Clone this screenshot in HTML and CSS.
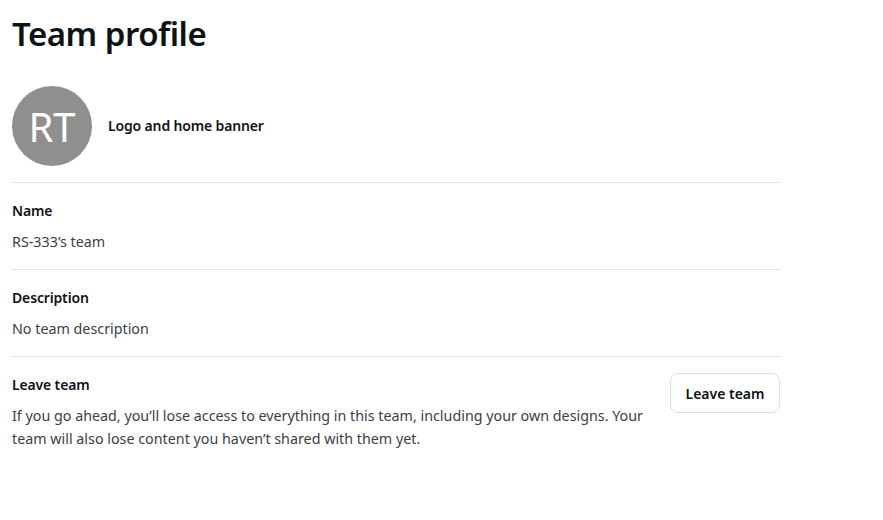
FILE: index.html
```html
<!doctype html>
<html lang="en">

<head>
  <meta charset="UTF-8" />
  <meta name="viewport" content="width=device-width, initial-scale=1.0" />
  <title>Team profile</title>
  <link rel="stylesheet" href="styles.css">
</head>

<body>
  <div class="page">
    <h1 class="title"> Team profile </h1>

    <div class="section section-logo">
      <div class="avatar"> RT </div>
      <div class="label"> Logo and home banner </div>
    </div>

    <div class="section">
      <div class="label"> Name </div>
      <div class="value"> RS-333’s team </div>
    </div>

    <div class="section">
      <div class="label"> Description </div>
      <div class="value"> No team description </div>
    </div>

    <div class="section section-leave">
      <div class="leave-text">
        <div class="label"> Leave team </div>
        <p class="value"> If you go ahead, you’ll lose access to everything in this team, including your own designs. Your team will also lose content you haven’t shared with them yet. </p>
      </div>
      <div class="btn"> Leave team </div>
    </div>
  </div>
</body>

</html>
```

FILE: styles.css
```css
body {
  margin: 0;
  background-color: #FFFFFF;
  color: #0d1216;
  font-family: "Noto Sans", sans-serif;
}

.page {
  width: 768px;
  padding: 14px 12px 0 12px;
}

.title {
  margin: 0 0 18px 0;
  font-size: 33px;
  line-height: 40px;
  font-weight: 600;
  letter-spacing: -0.5px;
}

.section {
  display: flex;
  flex-direction: column;
  gap: 7px;
  padding: 16px 0 15px 0;
  border-top: 1px solid #e3e4e6;
}

.section-logo {
  flex-direction: row;
  align-items: center;
  gap: 16px;
  padding: 14px 0 16px 0;
  border-top: none;
}

.avatar {
  display: flex;
  align-items: center;
  justify-content: center;
  width: 80px;
  height: 80px;
  border-radius: 50%;
  background-color: #8f8f8f;
  color: #FFFFFF;
  font-size: 40px;
  font-weight: 400;
}

.label {
  font-size: 14px;
  line-height: 24px;
  font-weight: 600;
  letter-spacing: -0.15px;
}

.value {
  margin: 0;
  font-size: 14.3px;
  line-height: 24px;
  color: #3b4045;
}

.section-leave {
  flex-direction: row;
  align-items: flex-start;
  justify-content: space-between;
  gap: 10px;
}

.leave-text {
  display: flex;
  flex-direction: column;
  gap: 7px;
  flex: 1;
}

.leave-text .value {
  line-height: 23px;
}

.btn {
  display: flex;
  align-items: center;
  justify-content: center;
  width: 108px;
  height: 38px;
  border: 1px solid #dcdde0;
  border-radius: 8px;
  font-size: 14px;
  font-weight: 600;
}
```
